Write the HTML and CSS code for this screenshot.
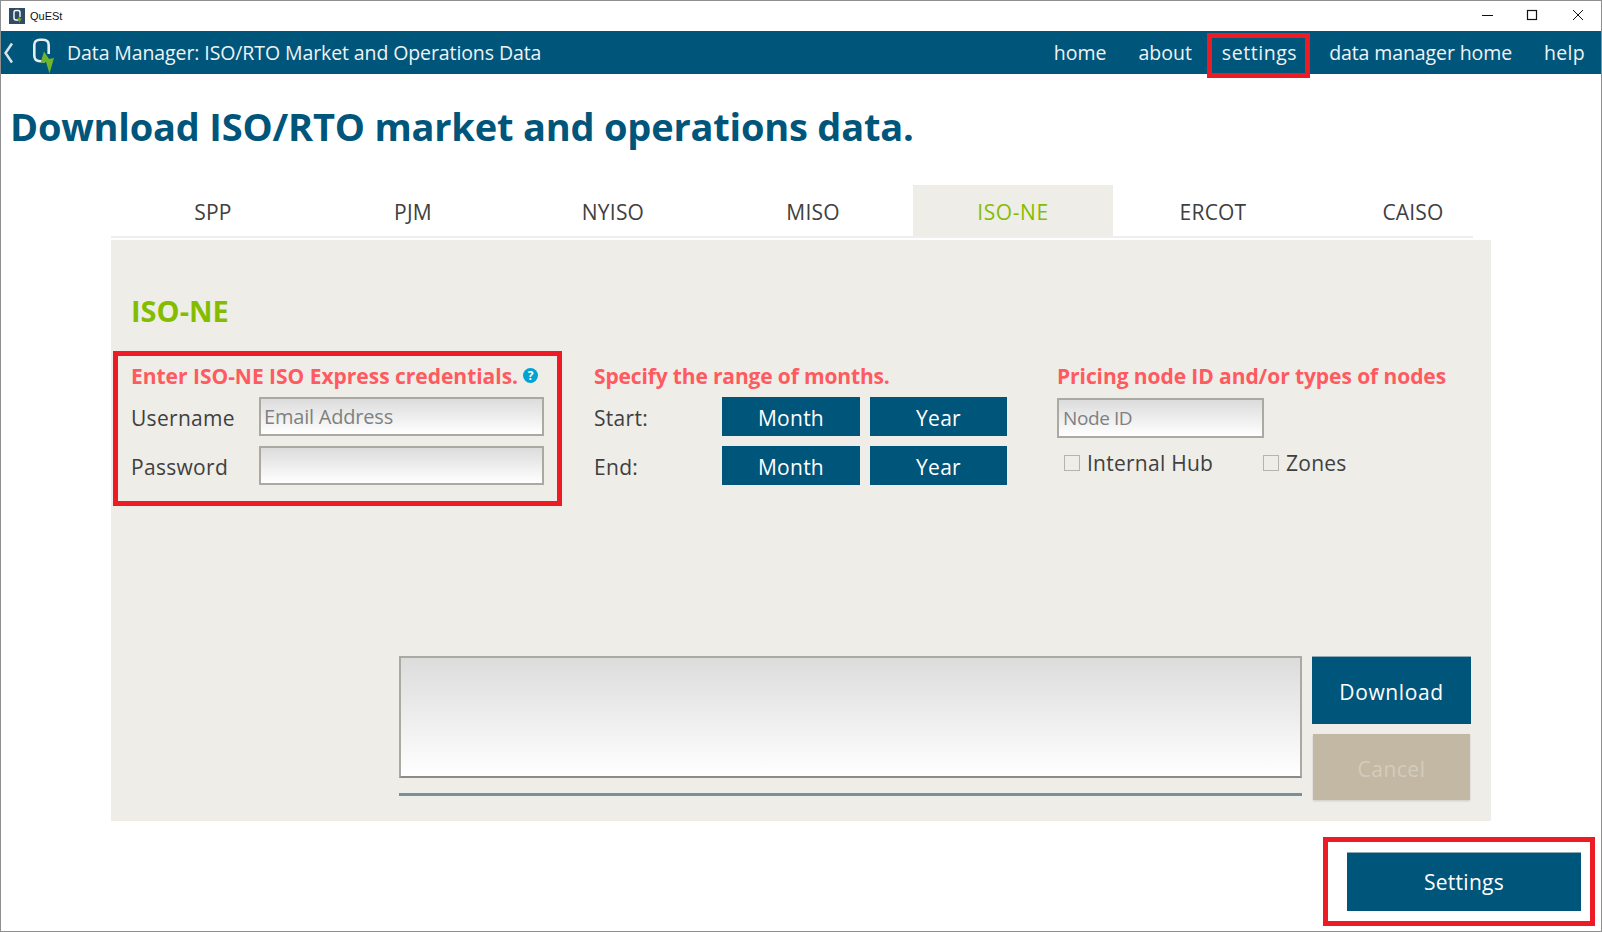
FILE: index.html
```html
<!doctype html>
<html lang="en">
<head>
  <meta charset="utf-8">
  <title>QuESt</title>
  <link rel="stylesheet" href="styles.css">
</head>
<body>
  <div class="window">
    <div class="titlebar">
      <svg class="appIcon" width="16" height="16" viewBox="0 0 16 16">
        <rect width="16" height="16" fill="#2f4b66"/>
        <path d="M9.5 12 H7 Q5 12 5 10 V4.5 Q5 2.5 7 2.5 H9 Q11 2.5 11 4.5 V9" fill="none" stroke="#fff" stroke-width="1.4"/>
        <path d="M10.5 8 L8.5 11.5 L10.3 11.2 L10 15 L12.8 10.5 L11 10.7 Z" fill="#7ab800"/>
      </svg>
      <span class="appName">QuESt</span>
      <div class="winControls">
        <svg class="winIcons" width="120" height="14" viewBox="0 0 120 14">
          <path d="M1 8.5 H12" stroke="#111" stroke-width="1"/>
          <rect x="46.500" y="3.500" width="9" height="9" fill="none" stroke="#111" stroke-width="1.200"/>
          <path d="M92 3 L102 13 M102 3 L92 13" stroke="#111" stroke-width="1"/>
        </svg>
      </div>
    </div>

    <div class="navbar">
      <svg class="backIcon" width="12" height="22" viewBox="0 0 12 22">
        <path d="M9 1.500 L2.500 11 L9 20.500" fill="none" stroke="#d8e4ea" stroke-width="2.500"/>
      </svg>
      <svg class="logo" width="26" height="38" viewBox="0 0 26 38">
        <path d="M14 25.200 H9 Q3.300 25.200 3.300 19.500 V9 Q3.300 3.800 9 3.800 H12 Q17.700 3.800 17.700 9 V18" fill="none" stroke="#e6eef2" stroke-width="2.600"/>
        <path d="M13 15.500 L9.500 27 L15 26 L18.500 37.500 L23 22 L18 23 Z" fill="#6fb52c"/>
      </svg>
      <span class="navTitle">Data Manager: ISO/RTO Market and Operations Data</span>
      <div class="navLinks">
        <a class="navLink">home</a>
        <a class="navLink">about</a>
        <a class="navLink navMarked">settings</a>
        <a class="navLink navLong">data manager home</a>
        <a class="navLink navHelp">help</a>
      </div>
    </div>

    <h1>Download ISO/RTO market and operations data.</h1>

    <div class="tabs">
      <div class="tab">SPP</div>
      <div class="tab">PJM</div>
      <div class="tab">NYISO</div>
      <div class="tab">MISO</div>
      <div class="tab tabActive">ISO-NE</div>
      <div class="tab">ERCOT</div>
      <div class="tab">CAISO</div>
    </div>

    <div class="panel">
      <h2>ISO-NE</h2>

      <div class="columns">
        <div class="col credBox">
          <div class="colTitle">Enter ISO-NE ISO Express credentials.
            <svg class="helpIcon" width="15" height="15" viewBox="0 0 15 15">
              <circle cx="7.5" cy="7.5" r="7.5" fill="#00a3d4"/>
              <text x="7.5" y="11.5" text-anchor="middle" class="helpMark">?</text>
            </svg>
          </div>
          <div class="formRow">
            <label class="rowLabel credLabel">Username</label>
            <input type="text" class="textBox credInput" placeholder="Email Address">
          </div>
          <div class="formRow">
            <label class="rowLabel credLabel">Password</label>
            <input type="text" class="textBox credInput">
          </div>
        </div>

        <div class="col monthCol">
          <div class="colTitle">Specify the range of months.</div>
          <div class="formRow">
            <label class="rowLabel monthLabel">Start:</label>
            <button class="btn pickMonth">Month</button>
            <button class="btn pickYear">Year</button>
          </div>
          <div class="formRow">
            <label class="rowLabel monthLabel">End:</label>
            <button class="btn pickMonth">Month</button>
            <button class="btn pickYear">Year</button>
          </div>
        </div>

        <div class="col nodeCol">
          <div class="colTitle">Pricing node ID and/or types of nodes</div>
          <input type="text" class="textBox nodeInput" placeholder="Node ID">
          <div class="checks">
            <label class="check checkHub"><input type="checkbox"> Internal Hub</label>
            <label class="check"><input type="checkbox"> Zones</label>
          </div>
        </div>
      </div>

      <div class="lower">
        <div class="logArea">
          <textarea class="logBox"></textarea>
          <div class="progress"></div>
        </div>
        <div class="actions">
          <button class="btn downloadBtn">Download</button>
          <button class="btn cancelBtn">Cancel</button>
        </div>
      </div>
    </div>

    <div class="footer">
      <div class="settingsBox">
        <button class="btn settingsBtn">Settings</button>
      </div>
    </div>
  </div>
</body>
</html>
```

FILE: styles.css
```css
html, body{
  margin: 0;
  padding: 0;
  background: #fff;
}

.window{
  width: 1602px;
  height: 932px;
  box-sizing: border-box;
  border: 1px solid #8f8f8f;
  font-family: "Open Sans", "Noto Sans", sans-serif;
  color: #404040;
  overflow: hidden;
}

.titlebar{
  height: 30px;
  display: flex;
  align-items: center;
  padding-left: 8px;
}

.appName{
  font-size: 11px;
  margin-left: 5px;
  color: #111;
  font-family: "Liberation Sans", sans-serif;
}

.winControls{
  margin-left: auto;
  height: 14px;
  margin-bottom: 4px;
}

.winIcons{
  display: block;
}

.navbar{
  height: 43px;
  background: #00557a;
  display: flex;
  align-items: center;
  color: #eef3f6;
}

.backIcon{
  margin-left: 2px;
}

.logo{
  margin-left: 16px;
  margin-top: 4px;
}

.navTitle{
  margin-left: 10px;
  font-size: 19.5px;
  letter-spacing: -0.1px;
}

.navLinks{
  margin-left: auto;
  margin-right: 16px;
  display: flex;
  align-items: center;
  height: 100%;
}

.navLink{
  font-size: 19.5px;
  margin-left: 32px;
}

.navLong{
  letter-spacing: -0.1px;
}

.navHelp{
  letter-spacing: 0.3px;
}

.navMarked{
  align-self: flex-start;
  box-sizing: border-box;
  height: 45px;
  margin-top: 2px;
  margin-left: 15px;
  margin-right: -13px;
  padding: 0 8px 0 10px;
  border: 5px solid #ed1c24;
  line-height: 30px;
  letter-spacing: 0.55px;
}

h1{
  margin: 0;
  height: 111px;
  line-height: 105px;
  padding-left: 9px;
  font-size: 38px;
  font-weight: 700;
  color: #00557a;
  letter-spacing: -0.2px;
}

.tabs{
  margin-left: 110px;
  width: 1362px;
  padding-left: 2px;
  box-sizing: border-box;
  display: flex;
  border-bottom: 2px solid #eeeeec;
}

.tab{
  flex: 0 0 200px;
  height: 51px;
  line-height: 54px;
  text-align: center;
  font-size: 21px;
  letter-spacing: 0.2px;
}

.tabActive{
  background: #eeede8;
  color: #84bd00;
  letter-spacing: 0.6px;
}

.panel{
  margin-top: 2px;
  margin-left: 110px;
  width: 1380px;
  height: 581px;
  box-sizing: border-box;
  background: #eeede8;
  padding-top: 51px;
}

h2{
  margin: 0 0 20px 20px;
  font-size: 29px;
  line-height: 40px;
  color: #84bd00;
  font-weight: 700;
}

.columns{
  display: flex;
  gap: 32px;
  padding-left: 2px;
}

.col{
  box-sizing: border-box;
  height: 155px;
  padding-top: 5px;
}

.credBox{
  width: 449px;
  padding: 0 0 0 13px;
  border: 5px solid #ed1c24;
}

.monthCol{
  width: 431px;
}

.colTitle{
  height: 40px;
  line-height: 40px;
  font-size: 21px;
  font-weight: 700;
  color: #ff5a5f;
  white-space: nowrap;
  letter-spacing: -0.08px;
}

.credBox .colTitle{
  letter-spacing: -0.02px;
}

.monthCol .colTitle{
  letter-spacing: -0.15px;
}

.helpIcon{
  margin-left: -1px;
  vertical-align: 1px;
}

.helpMark{
  font-size: 12px;
  font-weight: 700;
  fill: #fff;
}

.formRow{
  display: flex;
  align-items: center;
  height: 39px;
  margin-top: 1px;
  margin-bottom: 10px;
}

.rowLabel{
  font-size: 21px;
  letter-spacing: 0.3px;
  padding-top: 3px;
}

.credLabel{
  width: 128px;
}

.monthLabel{
  width: 128px;
}

.textBox{
  box-sizing: border-box;
  border: 2px solid #aaa9a4;
  background: linear-gradient(#dcdcdc, #fff);
  font-family: inherit;
  font-size: 20px;
  padding: 0 3px;
  outline: none;
  border-radius: 0;
  letter-spacing: -0.2px;
}

.textBox::placeholder{
  color: #808080;
  opacity: 1;
}

.credInput{
  width: 285px;
  height: 39px;
}

.nodeInput{
  display: block;
  width: 207px;
  height: 40px;
  margin-top: 2px;
  padding: 0 4px;
  font-size: 19px;
  letter-spacing: -0.4px;
}

.btn{
  border: none;
  border-radius: 0;
  padding: 3px 0 0 0;
  background: #00557a;
  color: #fff;
  font-family: inherit;
  font-size: 21px;
  letter-spacing: 0.25px;
}

.pickMonth{
  width: 138px;
  height: 39px;
}

.pickYear{
  width: 137px;
  height: 39px;
  margin-left: 10px;
}

.checks{
  display: flex;
  margin-top: 9px;
  padding-left: 7px;
}

.check{
  display: flex;
  align-items: center;
  font-size: 21px;
  height: 32px;
  letter-spacing: 0.25px;
}

.checkHub{
  width: 199px;
}

.check input{
  appearance: none;
  box-sizing: border-box;
  width: 16px;
  height: 16px;
  margin: 0 7px 0 0;
  border: 1px solid #b5b5b0;
  background: #eeede8;
}

.lower{
  display: flex;
  margin-top: 150px;
  margin-left: 288px;
}

.logArea{
  width: 903px;
}

.logBox{
  display: block;
  box-sizing: border-box;
  width: 903px;
  height: 122px;
  border: 2px solid #aaa9a4;
  border-bottom-color: #8c8b87;
  background: linear-gradient(#dcdcdc, #fff);
  resize: none;
  outline: none;
  border-radius: 0;
}

.progress{
  margin-top: 15px;
  height: 3px;
  background: #7a8f9c;
}

.actions{
  margin-left: 10px;
  display: flex;
  flex-direction: column;
}

.downloadBtn{
  width: 159px;
  height: 68px;
  border-top: 1px solid #8fa9b8;
  letter-spacing: 0.6px;
}

.cancelBtn{
  width: 157px;
  height: 66px;
  margin: 10px 0 0 1px;
  background: #c2b8a3;
  color: #d3ccbc;
  box-shadow: 0 1px 2px rgba(0, 0, 0, 0.15);
  letter-spacing: 0.5px;
}

.footer{
  display: flex;
  justify-content: flex-end;
  margin-top: 16px;
  padding-right: 6px;
}

.settingsBox{
  box-sizing: border-box;
  width: 272px;
  height: 89px;
  border: 5px solid #ed1c24;
  padding: 10px 0 0 19px;
}

.settingsBtn{
  width: 234px;
  height: 59px;
  padding-top: 0;
  border-top: 1px solid #8fa9b8;
}
```
